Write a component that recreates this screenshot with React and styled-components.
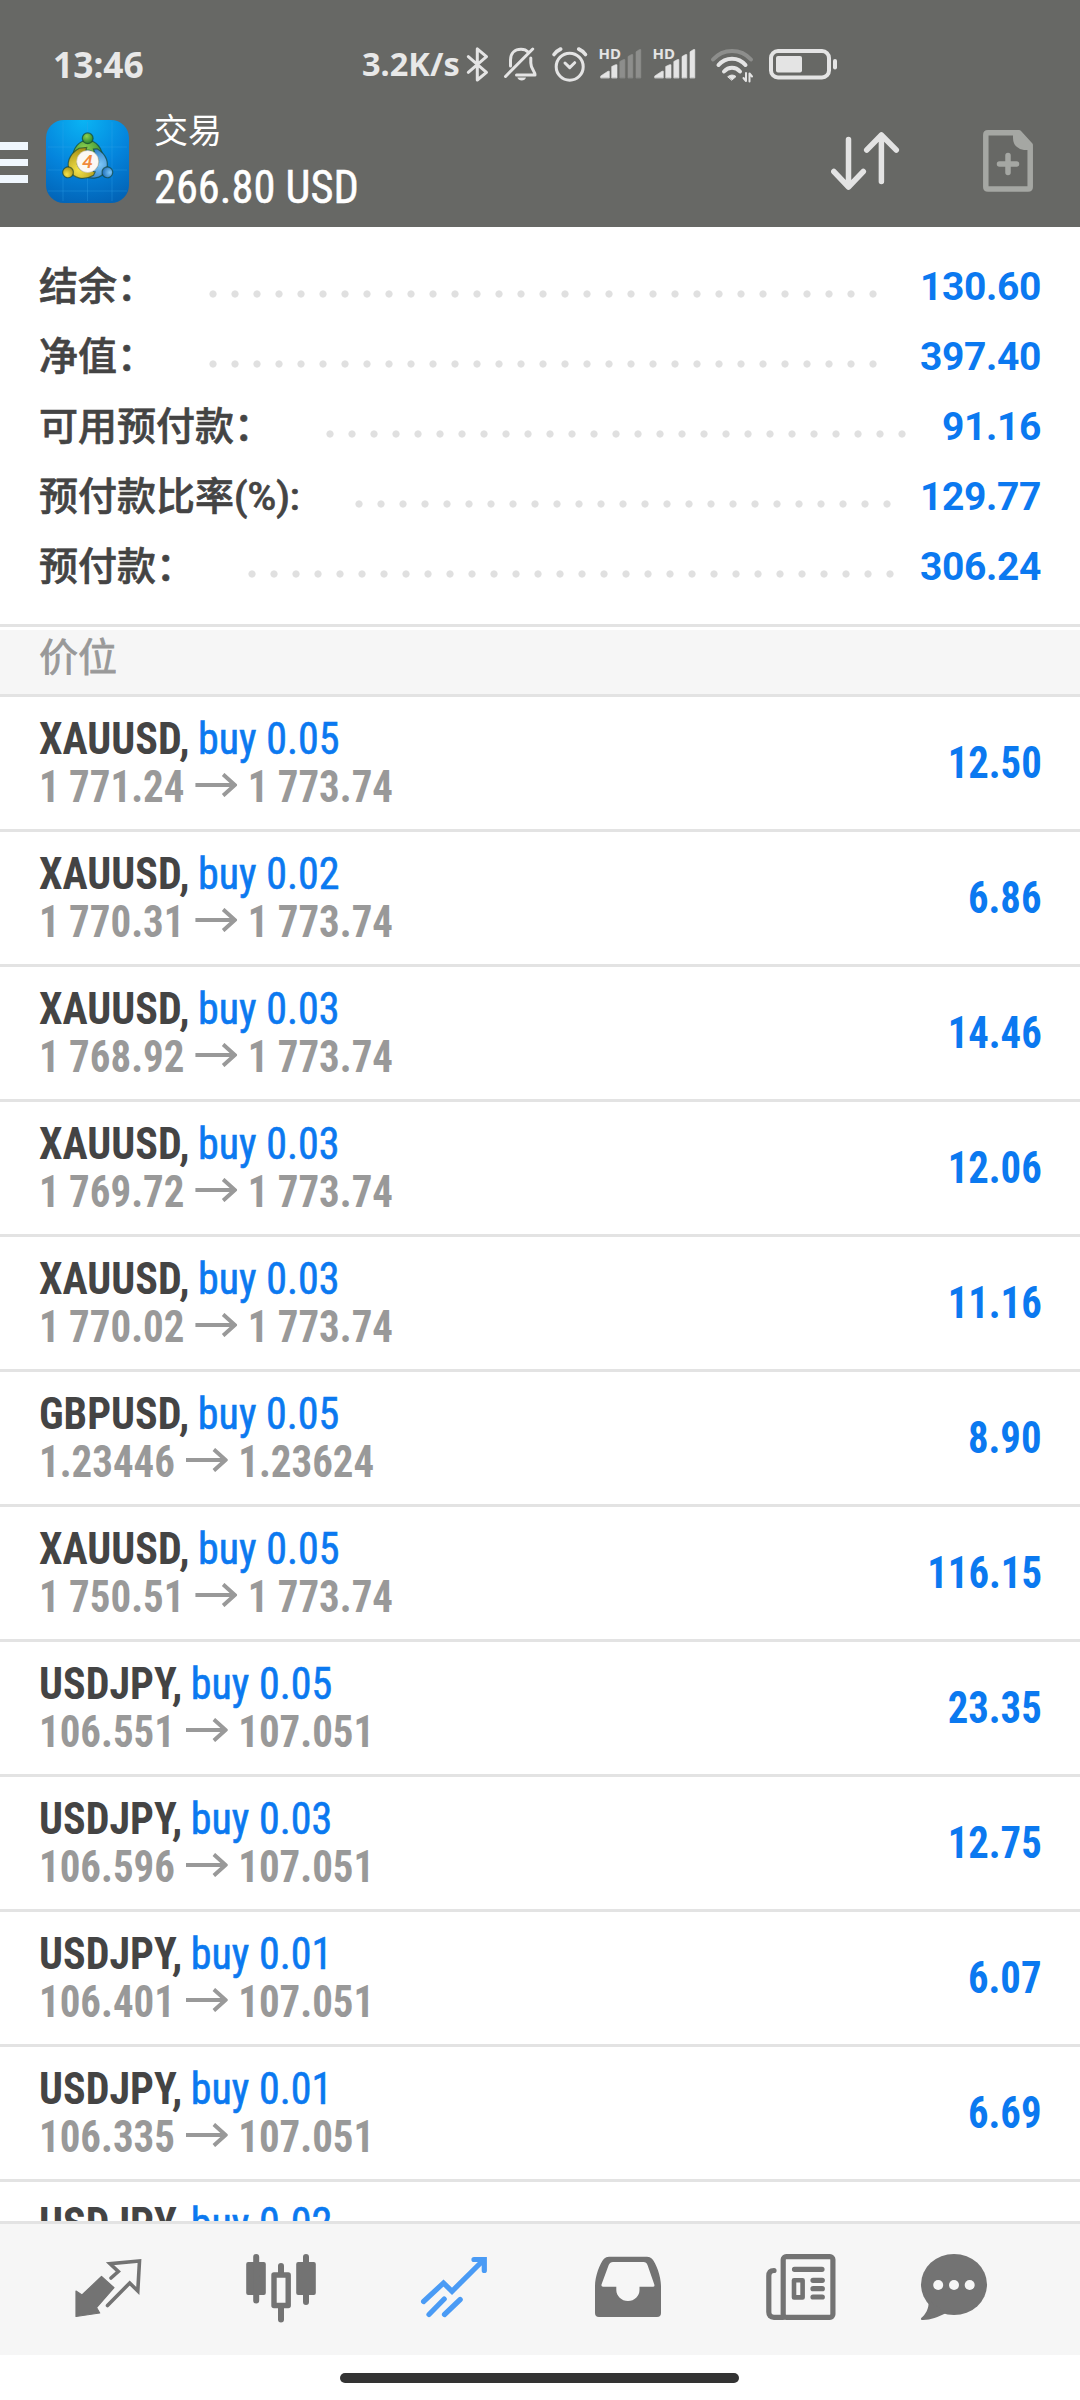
import React from "react";
import styled, { createGlobalStyle } from "styled-components";

const GlobalStyle = createGlobalStyle`
  *, *::before, *::after { box-sizing: border-box; }
  body { margin: 0; background: #fff; }
  svg { display: block; flex: none; }
`;

const sans = `Roboto, "Noto Sans CJK SC", sans-serif`;
const condensed = `"Roboto Condensed", Roboto, "Noto Sans CJK SC", sans-serif`;

const Screen = styled.div`
  display: flex;
  flex-direction: column;
  width: 1080px;
  height: 2400px;
  overflow: hidden;
  background: #fff;
  font-family: ${sans};
`;

/* ---------- header ---------- */
const Header = styled.header`
  flex: none;
  height: 227px;
  background: #676865;
  color: #fff;
`;
const StatusBar = styled.div`
  display: flex;
  align-items: center;
  height: 90px;
  padding: 38px 0 0 53px;
  color: #e8e8e8;
  font-family: "Noto Sans", sans-serif;
  font-weight: 700;
  white-space: nowrap;
`;
const Clock = styled.span`
  width: 309px;
  font-size: 35.3px;
  line-height: 50px;
`;
const Speed = styled.span`
  width: 104px;
  font-size: 32.5px;
  line-height: 50px;
`;
const StatusIcon = styled.svg`
  width: ${(p) => p.$w}px;
  height: ${(p) => p.$h || 37}px;
  margin-top: 1px;
  margin-right: ${(p) => p.$gap || 0}px;
  overflow: visible;
  fill: none;
  stroke: #e4e4e4;
  stroke-width: 3;
  stroke-linecap: round;
  stroke-linejoin: round;
`;
const AppBar = styled.div`
  display: flex;
  align-items: center;
  height: 137px;
  padding: 5px 47px 0 0;
`;
const Menu = styled.div`
  display: flex;
  flex-direction: column;
  gap: 9px;
  width: 28px;
  margin: 3px 18px 0 0;
`;
const MenuBar = styled.span`
  height: 7.6px;
  background: #f0f7fe;
`;
const Titles = styled.div`
  flex: 1;
  margin-left: 25px;
  padding-bottom: 5px;
  font-family: ${condensed};
  line-height: 56px;
  white-space: nowrap;
`;
const Title = styled.div`
  font-size: 34px;
`;
const Profit = styled.div`
  font-size: 47px;
  -webkit-text-stroke: 0.5px currentColor;
  transform: scaleX(0.945);
  transform-origin: left;
`;
const HeaderIcon = styled.svg`
  width: ${(p) => p.$w}px;
  height: 62px;
  margin-left: ${(p) => p.$ml || 0}px;
  fill: none;
  stroke-width: 5.5;
  stroke-linecap: round;
  stroke-linejoin: round;
`;

/* ---------- account summary ---------- */
const Summary = styled.section`
  flex: none;
  height: 400px;
  padding: 25px 39px 0;
  border-bottom: 3px solid #e3e3e3;
`;
const SummaryRow = styled.div`
  display: flex;
  align-items: center;
  height: 70px;
  font-size: 39px;
  font-weight: 500;
  line-height: 70px;
  white-space: nowrap;
`;
const Label = styled.span`
  flex: none;
  width: ${(p) => p.$w}px;
  color: #444;
  -webkit-text-stroke: 0.6px currentColor;
`;
const Leader = styled.span`
  flex: none;
  width: ${(p) => p.$dots * 22}px;
  height: 8px;
  margin-top: 13px;
  background: radial-gradient(circle, #e0e0e0 3.2px, transparent 4px) 0 0 / 22px 8px repeat-x;
`;
const Amount = styled.span`
  margin-left: auto;
  color: #0b79f0;
  font-weight: 700;
  letter-spacing: -0.35px;
`;

/* ---------- positions ---------- */
const SectionTitle = styled.h2`
  flex: none;
  height: 67px;
  margin: 3px 0 0;
  padding-left: 39px;
  border-bottom: 3px solid #e3e3e3;
  background: #f6f6f6;
  color: #999;
  font-size: 39px;
  font-weight: 400;
  line-height: 57px;
  -webkit-text-stroke: 0.8px currentColor;
`;
const List = styled.div`
  flex: none;
  height: 1524px;
  overflow: hidden;
`;
const Row = styled.div`
  display: flex;
  align-items: center;
  justify-content: space-between;
  height: 135px;
  padding: 0 38.5px 0 39px;
  border-bottom: 3px solid #e3e3e3;
  font-family: ${condensed};
  font-size: 44px;
  font-weight: 700;
  line-height: 48px;
  white-space: nowrap;
`;
const Line = styled.div`
  display: flex;
  align-items: center;
  height: 48px;
  color: ${(p) => p.$color};
  transform: scaleX(${(p) => p.$stretch});
  transform-origin: left;
`;
const Side = styled.span`
  margin-left: 9px;
  color: #0b79f0;
  font-weight: 400;
  -webkit-text-stroke: 0.6px currentColor;
`;
const Arrow = styled.svg`
  width: 45px;
  height: 24px;
  margin: 0 11px 4px 12px;
  fill: none;
  stroke: #999;
  stroke-width: 4.2;
`;
const Result = styled.div`
  color: #0b79f0;
  transform: scaleX(0.925);
  transform-origin: right;
`;

/* ---------- bottom navigation ---------- */
const Nav = styled.nav`
  flex: none;
  display: grid;
  grid-template-columns: repeat(5, 173.2px) 133px;
  justify-items: center;
  height: 134px;
  padding: 24px 0 0 21.5px;
  border-top: 3px solid #e3e3e3;
  background: #f6f6f6;
`;
const NavIcon = styled.svg`
  width: 80px;
  height: 80px;
  color: ${(p) => (p.$active ? "#4a9bf5" : "#737373")};
  fill: none;
  stroke: none;
  stroke-linecap: round;
`;
const HomeArea = styled.div`
  flex: none;
  height: 45px;
  padding: 18px 0 0 340px;
`;
const HomeIndicator = styled.div`
  width: 399px;
  height: 10px;
  border-radius: 5px;
  background: #333;
`;

const summary = [
  { label: "结余：", w: 163, dots: 31, value: "130.60" },
  { label: "净值：", w: 163, dots: 31, value: "397.40" },
  { label: "可用预付款：", w: 280, dots: 27, value: "91.16" },
  { label: "预付款比率(%):", w: 309, dots: 25, value: "129.77" },
  { label: "预付款：", w: 202, dots: 30, value: "306.24" },
];

const positions = [
  ["XAUUSD", "0.05", "1 771.24", "1 773.74", "12.50"],
  ["XAUUSD", "0.02", "1 770.31", "1 773.74", "6.86"],
  ["XAUUSD", "0.03", "1 768.92", "1 773.74", "14.46"],
  ["XAUUSD", "0.03", "1 769.72", "1 773.74", "12.06"],
  ["XAUUSD", "0.03", "1 770.02", "1 773.74", "11.16"],
  ["GBPUSD", "0.05", "1.23446", "1.23624", "8.90"],
  ["XAUUSD", "0.05", "1 750.51", "1 773.74", "116.15"],
  ["USDJPY", "0.05", "106.551", "107.051", "23.35"],
  ["USDJPY", "0.03", "106.596", "107.051", "12.75"],
  ["USDJPY", "0.01", "106.401", "107.051", "6.07"],
  ["USDJPY", "0.01", "106.335", "107.051", "6.69"],
  ["USDJPY", "0.02", "", "", ""],
];

const signalBars = [
  "M1.7 31.7V30L9 25.2H10.3V31.7Z",
  "M12.7 31.7V20.5L16.5 18.7H18V31.7Z",
  "M20.8 31.7V15.5L24.5 13.5H25.9V31.7Z",
  "M29 31.7V10.5L32.5 8.5H33.8V31.7Z",
  "M37 31.7V5.8L40.5 3.5H41.8V31.7Z",
];

function Signal({ level, gap }) {
  return (
    <StatusIcon $w={43} $gap={gap} viewBox="0 0 43 37">
      {signalBars.map((d, i) => (
        <path key={d} d={d} strokeWidth="0.6" stroke={i < level ? "#e4e4e4" : "#8d8e8c"} fill={i < level ? "#e4e4e4" : "#8d8e8c"} />
      ))}
      <text x="-0.5" y="12.8" fill="#e4e4e4" stroke="none" fontFamily="Noto Sans, sans-serif" fontSize="15" fontWeight="700">HD</text>
    </StatusIcon>
  );
}

function Logo() {
  const parts = [
    { id: "lgG", a: 0, light: "#8fd24f", dark: "#1c7d2e" },
    { id: "lgB", a: 120, light: "#7cc6f7", dark: "#1769b8" },
    { id: "lgY", a: 240, light: "#f3e24a", dark: "#a68f14" },
  ];
  return (
    <svg width="83" height="83" viewBox="0 0 83 83">
      <defs>
        <radialGradient id="lgBg" cx="0.45" cy="0" r="1.05">
          <stop offset="0" stopColor="#0ab4f4" />
          <stop offset="0.55" stopColor="#0484dc" />
          <stop offset="1" stopColor="#0263b6" />
        </radialGradient>
        {parts.map((p) => (
          <radialGradient key={p.id} id={p.id} cx="0.4" cy="0.3" r="0.75">
            <stop offset="0" stopColor={p.light} />
            <stop offset="1" stopColor={p.dark} />
          </radialGradient>
        ))}
      </defs>
      <rect width="83" height="83" rx="18" fill="url(#lgBg)" />
      <path d="M17 2V81M41.5 2V81M66 2V81M2 27H81M2 50H81M2 71H81" stroke="#35a5ea" strokeOpacity="0.3" strokeWidth="1" />
      {parts.map((p) => (
        <g key={p.id} transform={`rotate(${p.a} 41.7 41)`} stroke="#13402f" strokeOpacity="0.65" strokeWidth="1.2">
          <path d="M26.500 39C26.500 28 33 20.500 41.5 20.500C50 20.500 57 28 57 40L54 47L49 42C49 34 46 30 41.500 30C37.500 30 34 32 33 37L28.500 42Z" fill={`url(#${p.id})`} />
          <circle cx="41.7" cy="18.300" r="5.400" fill={`url(#${p.id})`} />
        </g>
      ))}
      <circle cx="41.7" cy="41.5" r="11" fill="#fbf8f4" stroke="#c9c3b4" strokeWidth="0.6" />
      <text x="41.5" y="48" textAnchor="middle" fontFamily="Roboto, sans-serif" fontSize="19" fontWeight="500" fontStyle="italic" fill="#f08a3c">4</text>
    </svg>
  );
}

export default function App() {
  return (
    <Screen>
      <GlobalStyle />
      <Header>
        <StatusBar>
          <Clock>13:46</Clock>
          <Speed>3.2K/s</Speed>
          <StatusIcon $w={24} $gap={13} viewBox="0 0 24 37">
            <path d="M2.300 10.700L20.500 26.300L11.300 34V2.800L20.500 10.700L2.300 26.300" />
          </StatusIcon>
          <StatusIcon $w={36} $gap={13} viewBox="0 0 36 37">
            <path d="M2.500 30.500L29.700 3M7.500 20V14C7.500 7 12 3.200 18 3.200C21 3.200 23.500 4.200 25 6M27.800 12V17C27.800 23 32 25 32 29H13.500" />
            <path d="M14.300 31.500H23C22 35.500 15.500 35.500 14.300 31.500Z" fill="#e4e4e4" stroke="none" />
          </StatusIcon>
          <StatusIcon $w={36} $gap={11} viewBox="0 0 36 37">
            <circle cx="17.700" cy="20.700" r="13.500" />
            <path d="M13 17L17.700 21.600L22.700 16.700" />
            <path d="M2 8.500Q4.500 5 8.700 3M26.700 3Q31 5 33.500 8.500" strokeWidth="3.600" />
          </StatusIcon>
          <Signal level={2} gap={10.5} />
          <Signal level={5} gap={14.5} />
          <StatusIcon $w={46} $gap={13} viewBox="0 0 46 37">
            <path d="M3 13.500C13 2 31 2 41 13.500" stroke="#8d8e8c" strokeWidth="4" />
            <path d="M8.500 19C15.500 10.500 28.500 10.500 35.500 19M14 25.500C18.500 20.500 25.500 20.500 30 25.500" strokeWidth="4" />
            <path d="M18 30.500Q22 27.500 26 30.500L22 34Z" fill="#e4e4e4" stroke="#e4e4e4" strokeWidth="1" />
            <path d="M36 27V35L33.500 32M39.500 35.500V27.500L42 30.500" strokeWidth="2" />
          </StatusIcon>
          <StatusIcon $w={69} $h={31} viewBox="0 0 69 31">
            <rect x="2" y="2" width="58" height="26.500" rx="7" strokeWidth="4" />
            <rect x="7" y="7" width="26" height="16.500" rx="2" fill="#e4e4e4" stroke="none" />
            <rect x="64" y="10" width="4" height="10.500" rx="2" fill="#e4e4e4" stroke="none" />
          </StatusIcon>
        </StatusBar>
        <AppBar>
          <Menu>
            <MenuBar />
            <MenuBar />
            <MenuBar />
          </Menu>
          <Logo />
          <Titles>
            <Title>交易</Title>
            <Profit>266.80 USD</Profit>
          </Titles>
          <HeaderIcon $w={69} viewBox="0 0 69 62" stroke="#e3e3e3">
            <path d="M17.500 9.500V57M2.800 41.500L17.500 57L32.300 41.500M50.400 51.500V5M35.700 20L50.400 5L65.300 20" />
          </HeaderIcon>
          <HeaderIcon $w={50} $ml={83} viewBox="0 0 50 62" stroke="#a5a7a3">
            <path d="M5 2.800H36L47.200 15V57Q47.200 59 45 59H5Q2.800 59 2.800 57V5Q2.800 2.800 5 2.800Z" />
            <path d="M30 3H37L48 15V20H41Q30 18 30 8Z" fill="#a5a7a3" stroke="none" />
            <path d="M25 25.500V42.500M16.500 34H33.500" />
          </HeaderIcon>
        </AppBar>
      </Header>

      <Summary>
        {summary.map((s) => (
          <SummaryRow key={s.label}>
            <Label $w={s.w}>{s.label}</Label>
            <Leader $dots={s.dots} />
            <Amount>{s.value}</Amount>
          </SummaryRow>
        ))}
      </Summary>

      <SectionTitle>价位</SectionTitle>
      <List>
        {positions.map(([symbol, lots, from, to, result], i) => (
          <Row key={i}>
            <div>
              <Line $color="#444" $stretch={0.955}>
                {symbol},<Side>buy {lots}</Side>
              </Line>
              <Line $color="#999" $stretch={0.93}>
                {from && (
                  <>
                    {from}
                    <Arrow viewBox="0 0 45 24">
                      <path d="M0 12H42.500M30 1.500L42.500 12L30 22.500" />
                    </Arrow>
                    {to}
                  </>
                )}
              </Line>
            </div>
            <Result>{result}</Result>
          </Row>
        ))}
      </List>

      <Nav>
        <NavIcon viewBox="0 0 80 80">
          <path d="M8 43L14 47L33.500 28.500L46 39.700L28.500 59.500L31.700 65L8 68.500Z" fill="currentColor" stroke="currentColor" strokeWidth="1.200" strokeLinejoin="round" />
          <path d="M43 30L50.300 23.500L42 15.700L71.500 13L69.800 43L61.700 35L39.500 57.500" stroke="currentColor" strokeWidth="3.600" />
        </NavIcon>
        <NavIcon viewBox="0 0 80 80">
          <rect x="5.200" y="14" width="19.600" height="33" rx="2" fill="currentColor" />
          <rect x="55.200" y="14" width="19.600" height="33" rx="2" fill="currentColor" />
          <path d="M15.200 9V52.500M65 9V54M40 18V26M40 60V71.500" stroke="currentColor" strokeWidth="6" />
          <rect x="33" y="27" width="14.200" height="30.500" stroke="currentColor" strokeWidth="5.400" strokeLinejoin="round" />
        </NavIcon>
        <NavIcon $active viewBox="0 0 80 80">
          <path d="M9.600 53.500L29.500 35L38 43.300L69.500 12M60 11.500H70.300V22.500M15 66.500L30.200 51M30.500 66.500L46.200 51.500" stroke="currentColor" strokeWidth="5.200" />
        </NavIcon>
        <NavIcon viewBox="0 0 80 80">
          <path fillRule="evenodd" fill="currentColor" d="M7 38C7 28 12 15 16 10.700Q18 8.700 21 8.700H59Q62 8.700 64 10.700C68 15 73 28 73 38V65Q73 69 69 69H11Q7 69 7 65ZM15 38.700H28.300V42C28.300 48 33.500 53 40 53C46.500 53 51.500 48 51.500 42V38.700H65Q67 38.700 66.300 36.500L59.500 17Q58.500 14 55.500 14H25Q22 14 20.700 17L13.500 36.500Q13 38.700 15 38.700Z" />
        </NavIcon>
        <NavIcon viewBox="0 0 80 80">
          <g stroke="currentColor" strokeWidth="5.200">
            <rect x="22.200" y="8.600" width="49.700" height="60.700" rx="3" />
            <path d="M22 69.300H13Q7.800 69.300 7.800 64V28Q7.800 22.500 13 22.500" />
            <path d="M33.500 21.300H61M52 32.300H61.300M52 40.700H61.300M52 49H61.300" />
            <rect x="33" y="32.200" width="8.600" height="17.200" strokeWidth="4.600" strokeLinejoin="round" />
          </g>
        </NavIcon>
        <NavIcon viewBox="0 0 80 80">
          <ellipse cx="40" cy="36.500" rx="33" ry="30.600" fill="currentColor" />
          <path d="M14.500 52C15.500 61 11 67 7.200 70Q6 72 9 72C17 72 24 69 32 65Z" fill="currentColor" />
          <g fill="#f6f6f6">
            <circle cx="24.200" cy="37" r="5" />
            <circle cx="40" cy="37" r="5" />
            <circle cx="55.700" cy="37" r="5" />
          </g>
        </NavIcon>
      </Nav>
      <HomeArea>
        <HomeIndicator />
      </HomeArea>
    </Screen>
  );
}
